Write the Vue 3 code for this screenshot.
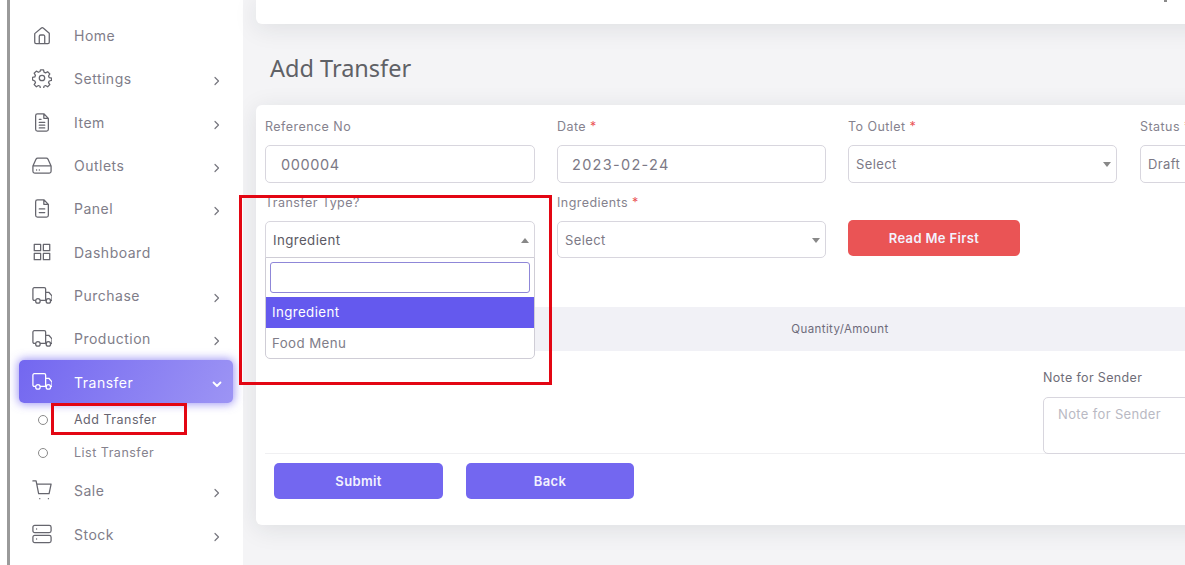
<script setup>
const chevronItems = new Set(['Settings','Item','Outlets','Panel','Purchase','Production','Sale','Stock'])
const topItems = [
  ['Home','home'],['Settings','gear'],['Item','file'],['Outlets','drive'],['Panel','file2'],['Dashboard','grid'],['Purchase','truck'],['Production','truck']
]
const bottomItems = [['Sale','cart'],['Stock','server']]
const paths = {
  home: 'M3 9.5 10 3.5a2 2 0 0 1 2.6 0L19 9v10a1.5 1.5 0 0 1-1.5 1.5h-13A1.5 1.5 0 0 1 3 19ZM8 20.5v-8a1.5 1.5 0 0 1 1.5-1.5h3a1.5 1.5 0 0 1 1.5 1.5v8',
  gear: 'M11 14a3 3 0 1 0 0-6 3 3 0 0 0 0 6ZM9.3 2h3.4l.5 2.6 1.7.8 2.3-1.3 2.4 2.4-1.4 2.3.7 1.7 2.6.6v2.6l-2.6.6-.7 1.7 1.4 2.3-2.4 2.4-2.3-1.4-1.7.8-.5 2.6H9.3l-.5-2.6-1.7-.8-2.3 1.4-2.4-2.4 1.4-2.3-.7-1.7L.5 13v-2.6l2.6-.6.7-1.7-1.4-2.3 2.4-2.4 2.3 1.3 1.7-.8Z',
  file: 'M13 2H6a2 2 0 0 0-2 2v15a2 2 0 0 0 2 2h10a2 2 0 0 0 2-2V7ZM13 2v5h5M8 11.5h6M8 14.5h6M8 17.5h6M8 8h2',
  file2: 'M13 2H6a2 2 0 0 0-2 2v15a2 2 0 0 0 2 2h10a2 2 0 0 0 2-2V7ZM13 2v5h5M8 12h6M8 16h6',
  drive: 'M21 12H1M4.5 4.5 1 12v6a2 2 0 0 0 2 2h16a2 2 0 0 0 2-2v-6l-3.500-7.500A2 2 0 0 0 15.700 3.500H6.300A2 2 0 0 0 4.500 4.500ZM5 16.500h.1M8 16.500h.1',
  grid: 'M2.500 2.500h7v7h-7ZM12.500 2.500h7v7h-7ZM12.500 12.500h7v7h-7ZM2.500 12.500h7v7h-7Z',
  truck: 'M4 17H2.500A1.500 1.500 0 0 1 1 15.500V4.500A1.500 1.500 0 0 1 2.500 3H13.500a1.500 1.500 0 0 1 1.500 1.500V17H9M15 8h3.500l3.500 4v5h-2M15 17h1M6.500 15a2.500 2.500 0 1 0 0 5 2.500 2.500 0 0 0 0-5ZM18 15a2.500 2.500 0 1 0 0 5 2.500 2.500 0 0 0 0-5Z',
  cart: 'M1 1h3.500l2.800 14h11.500l2.200-10.500H5.500M8.500 20.500h.1M18 20.500h.1',
  server: 'M3 1.500h16a2 2 0 0 1 2 2v4a2 2 0 0 1-2 2H3a2 2 0 0 1-2-2v-4a2 2 0 0 1 2-2ZM3 12.500h16a2 2 0 0 1 2 2v4a2 2 0 0 1-2 2H3a2 2 0 0 1-2-2v-4a2 2 0 0 1 2-2ZM5 5.500h.1M5 16.500h.1'
}
</script>

<template>
  <div class="page">
    <aside class="sidebar">
      <nav class="nav">
        <a v-for="item in topItems" :key="item[0]" class="nav-item">
          <svg class="icon" viewBox="0 0 22 22"><path :d="paths[item[1]]" /></svg>
          <span class="nav-label">{{ item[0] }}</span>
          <svg v-if="chevronItems.has(item[0])" class="chev" viewBox="0 0 10 10"><path d="M3 1.500 6.500 5 3 8.500" /></svg>
        </a>
        <a class="nav-item active">
          <svg class="icon" viewBox="0 0 22 22"><path :d="paths.truck" /></svg>
          <span class="nav-label">Transfer</span>
          <svg class="chev" viewBox="0 0 10 10"><path d="M1.500 3.500 5 7l3.500-3.500" /></svg>
        </a>
        <a class="sub-item"><i class="ring"></i><span>Add Transfer</span></a>
        <a class="sub-item muted"><i class="ring"></i><span>List Transfer</span></a>
        <a v-for="item in bottomItems" :key="item[0]" class="nav-item">
          <svg class="icon" viewBox="0 0 22 22"><path :d="paths[item[1]]" /></svg>
          <span class="nav-label">{{ item[0] }}</span>
          <svg class="chev" viewBox="0 0 10 10"><path d="M3 1.500 6.500 5 3 8.500" /></svg>
        </a>
      </nav>
    </aside>

    <main class="main">
      <div class="top-card"><i class="top-mark"></i></div>
      <h1 class="title">Add Transfer</h1>

      <section class="card">
        <div class="row">
          <div class="field">
            <label>Reference No</label>
            <div class="control input">000004</div>
          </div>
          <div class="field">
            <label>Date <b>*</b></label>
            <div class="control input date">2023-02-24</div>
          </div>
          <div class="field">
            <label>To Outlet <b>*</b></label>
            <div class="control select"><span>Select</span><i class="caret"></i></div>
          </div>
          <div class="field">
            <label>Status <b>*</b></label>
            <div class="control select"><span>Draft</span></div>
          </div>
        </div>

        <div class="row second">
          <div class="field">
            <label>Transfer Type?</label>
            <div class="control select open type-select">
              <span class="dark">Ingredient</span><i class="caret up"></i>
              <div class="menu">
                <div class="search"></div>
                <div class="option selected">Ingredient</div>
                <div class="option">Food Menu</div>
              </div>
            </div>
          </div>
          <div class="field">
            <label>Ingredients <b>*</b></label>
            <div class="control select"><span>Select</span><i class="caret"></i></div>
          </div>
          <div class="field read-field">
            <button class="btn danger">Read Me First</button>
          </div>
        </div>

        <div class="table-head"><span>Quantity/Amount</span></div>

        <div class="note-row">
          <div class="note">
            <label>Note for Sender</label>
            <div class="textarea">Note for Sender</div>
          </div>
        </div>

        <div class="actions">
          <button class="btn primary">Submit</button>
          <button class="btn primary back">Back</button>
        </div>
      </section>
    </main>

    <div class="mark mark-menu"></div>
    <div class="mark mark-sub"></div>
  </div>
</template>

<style>
html, body { margin: 0; padding: 0; overflow: hidden; }
</style>

<style scoped>
.page {
  position: relative;
  width: 1185px;
  height: 565px;
  overflow: hidden;
  display: flex;
  background: #f4f4f6;
  font-family: Inter, "Noto Sans", sans-serif;
  color: #6e6b7b;
}
.sidebar {
  box-sizing: border-box;
  width: 243px;
  flex: none;
  background: #fff;
  padding-left: 10px;
  position: relative;
}
.sidebar::before {
  content: "";
  position: absolute;
  left: 7px;
  top: 0;
  bottom: 0;
  width: 3px;
  background: #9a9a9a;
}
.nav { padding-top: 13.900px; }
.nav-item {
  box-sizing: border-box;
  height: 43.300px;
  margin: 0 10px 0 9px;
  padding-left: 13px;
  border-radius: 5px;
  display: flex;
  align-items: center;
  color: #807d89;
  font-size: 14px;
  letter-spacing: .5px;
}
.icon {
  width: 20px;
  height: 20px;
  flex: none;
  fill: none;
  stroke: #66666e;
  stroke-width: 1.400;
  stroke-linecap: round;
  stroke-linejoin: round;
  margin-top: -1px;
}
.nav-label { margin-left: 22px; flex: 1; }
.chev {
  width: 10px;
  height: 10px;
  margin-right: 11px;
  margin-top: 5px;
  fill: none;
  stroke: #77777f;
  stroke-width: 1.200;
  stroke-linecap: round;
  stroke-linejoin: round;
}
.active {
  background: linear-gradient(118deg, #7367f0, rgba(115, 103, 240, .7));
  box-shadow: 0 0 10px 1px rgba(115, 103, 240, .7);
  color: #fff;
  height: 43px;
}
.active .nav-label { margin-top: 1px; }
.active .icon, .active .chev { stroke: #fff; }
.active .chev { stroke-width: 1.800; }
.sub-item {
  height: 33px;
  display: flex;
  align-items: center;
  padding-left: 28px;
  font-size: 12.500px;
  letter-spacing: .5px;
  color: #66636f;
}
.sub-item.muted { color: #85828e; }
.ring {
  box-sizing: border-box;
  width: 10px;
  height: 10px;
  border: 1px solid #8a8a8a;
  border-radius: 50%;
  margin: 0 26px 0 0;
}

.main {
  flex: 1;
  min-width: 0;
  padding-left: 13px;
}
.top-card {
  position: relative;
  height: 24px;
  width: 1000px;
  background: #fff;
  border-radius: 0 0 6px 6px;
  box-shadow: 0 4px 24px rgba(34, 41, 47, .1);
}
.top-mark {
  position: absolute;
  left: 908px;
  top: 0;
  width: 3px;
  height: 2px;
  background: #8a8a8a;
}
.title {
  margin: 27px 0 0 14px;
  height: 54px;
  font-family: "Noto Sans", "Open Sans", sans-serif;
  font-weight: 400;
  font-size: 23.500px;
  line-height: 34px;
  color: #5f6166;
}
.card {
  box-sizing: border-box;
  width: 1000px;
  height: 420px;
  background: #fff;
  border-radius: 6px;
  box-shadow: 0 4px 24px rgba(34, 41, 47, .1);
  padding: 15px 0 0 9px;
}
.row {
  display: grid;
  grid-template-columns: 270px 269px 270px 269px;
  column-gap: 22px;
}
.row .field:nth-child(3) { padding-right: 1px; }
.second { margin-top: 13px; }
.field { display: flex; flex-direction: column; }
label {
  display: block;
  height: 14px;
  line-height: 14px;
  margin-bottom: 11px;
  font-size: 12.500px;
  letter-spacing: .45px;
  color: #85828e;
}
label b { color: #ea5455; font-weight: 400; }
.control {
  box-sizing: border-box;
  position: relative;
  height: 38px;
  border: 1px solid #d8d6de;
  border-radius: 5px;
  display: flex;
  align-items: center;
  font-size: 13px;
  letter-spacing: .35px;
  color: #6e6b7b;
  background: #fff;
}
.second .control { height: 37px; }
.input { padding-left: 15px; font-size: 14.500px; letter-spacing: .6px; color: #7c7986; }
.date { padding-left: 14px; letter-spacing: 1.300px; }
.select { padding-left: 7px; }
.select span { font-size: 13px; letter-spacing: .4px; color: #7c7986; }
.select span.dark { font-size: 13.300px; color: #5c5a64; }
.caret {
  position: absolute;
  right: 5px;
  top: 16px;
  width: 0;
  height: 0;
  border-left: 4px solid transparent;
  border-right: 4px solid transparent;
  border-top: 5px solid #888;
}
.caret.up {
  border-top: 0;
  border-bottom: 5px solid #888;
}
.open { border-radius: 5px 5px 0 0; }
.menu {
  box-sizing: border-box;
  position: absolute;
  z-index: 2;
  left: -1px;
  right: -1px;
  top: 35px;
  height: 102px;
  background: #fff;
  border: 1px solid #cfcdd6;
  border-radius: 0 0 5px 5px;
  padding-top: 4px;
}
.search {
  box-sizing: border-box;
  height: 31px;
  margin: 0 4px 4px;
  border: 1px solid #8f87d8;
  border-radius: 3px;
}
.option {
  height: 31px;
  line-height: 30px;
  padding-left: 6px;
  font-size: 13.300px;
  letter-spacing: .4px;
  color: #807d89;
}
.selected { background: #6459ee; color: #fff; }
.btn {
  box-sizing: border-box;
  border: 0;
  border-radius: 5px;
  font-family: inherit;
  font-size: 13px;
  font-weight: 600;
  letter-spacing: .35px;
  color: #f3f2fe;
}
.read-field { padding-top: 24px; }
.danger { width: 172px; height: 36px; background: #ea5455; }
.table-head {
  height: 44px;
  margin-top: 49px;
  background: #f1f1f6;
  display: flex;
  align-items: center;
  justify-content: center;
  width: 1150px;
  font-size: 11.500px;
  letter-spacing: .4px;
  color: #6e6b7b;
}
.note-row {
  height: 102px;
  border-bottom: 1px solid #f0f0f2;
  padding-left: 778px;
}
.note { padding-top: 20px; }
.note label { margin-bottom: 12px; font-size: 12.500px; letter-spacing: .35px; color: #6f6d78; }
.textarea {
  box-sizing: border-box;
  width: 300px;
  height: 57px;
  border: 1px solid #d8d6de;
  border-radius: 5px;
  padding: 8px 14px;
  font-size: 13px;
  line-height: 16px;
  letter-spacing: .35px;
  color: #b9b9c3;
}
.actions { display: flex; gap: 23px; padding: 9px 0 0 9px; }
.primary { width: 169px; height: 36px; background: #7367f0; }
.back { width: 168px; }

.mark {
  box-sizing: border-box;
  position: absolute;
  z-index: 5;
  border: 3px solid #e30613;
}
.mark-menu { left: 239px; top: 195px; width: 313px; height: 190px; }
.mark-sub { left: 51px; top: 403px; width: 136px; height: 32px; }
</style>
